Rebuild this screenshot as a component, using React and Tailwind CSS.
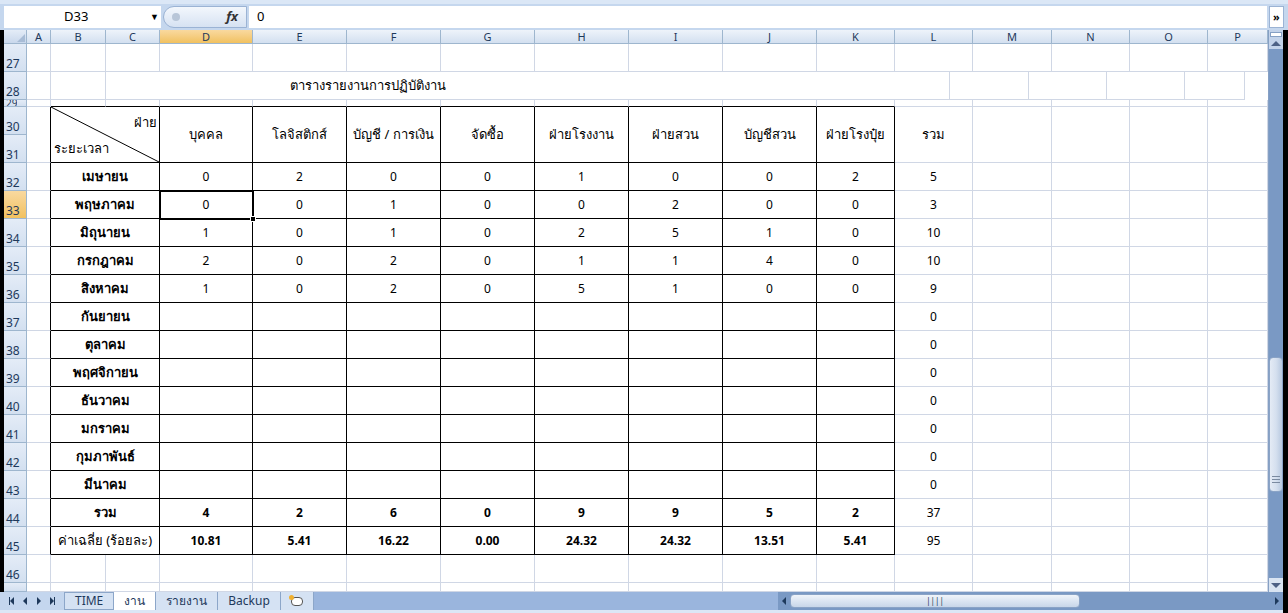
import React from "react";

const cols = [
  ["A", 24], ["B", 55], ["C", 54], ["D", 93], ["E", 94], ["F", 94], ["G", 94], ["H", 94],
  ["I", 94], ["J", 94], ["K", 78], ["L", 78], ["M", 79], ["N", 78], ["O", 78], ["P", 60],
];
const W = Object.fromEntries(cols);
const tableCols = ["D", "E", "F", "G", "H", "I", "J", "K"];
const heads = ["บุคคล", "โลจิสติกส์", "บัญชี / การเงิน", "จัดซื้อ", "ฝ่ายโรงงาน", "ฝ่ายสวน", "บัญชีสวน", "ฝ่ายโรงปุ๋ย"];
const months = ["เมษายน", "พฤษภาคม", "มิถุนายน", "กรกฎาคม", "สิงหาคม", "กันยายน", "ตุลาคม", "พฤศจิกายน", "ธันวาคม", "มกราคม", "กุมภาพันธ์", "มีนาคม"];
const vals = [
  [0, 2, 0, 0, 1, 0, 0, 2, 5],
  [0, 0, 1, 0, 0, 2, 0, 0, 3],
  [1, 0, 1, 0, 2, 5, 1, 0, 10],
  [2, 0, 2, 0, 1, 1, 4, 0, 10],
  [1, 0, 2, 0, 5, 1, 0, 0, 9],
];
const sum = [4, 2, 6, 0, 9, 9, 5, 2, 37];
const avg = ["10.81", "5.41", "16.22", "0.00", "24.32", "24.32", "13.51", "5.41", "95"];

const font = "font-['Liberation_Sans','Noto_Sans_Thai','Noto_Sans',sans-serif]";

function Cell({ w, h, black, children, className = "" }) {
  return (
    <div
      className={`box-border shrink-0 border-r border-b flex items-center justify-center text-[12px] text-black ${black ? "border-black" : "border-[#d0d7e5]"} ${className}`}
      style={{ width: w, height: h }}
    >
      {children}
    </div>
  );
}

function Blank({ h, from = 0, to = 16, blackB = [] }) {
  return cols.slice(from, to).map(([c, w]) => (
    <Cell key={c} w={w} h={h} className={blackB.includes(c) ? "!border-b-black" : ""} />
  ));
}

function Row({ children }) {
  return <div className="flex shrink-0">{children}</div>;
}

function TableRow({ label, data, bold, totalBold, h = 28 }) {
  return (
    <Row>
      <Cell w={24} h={h} className="!border-r-black" />
      <Cell w={109} h={h} black className="text-[13px]">
        <span className={bold ? "font-semibold" : ""}>{label}</span>
      </Cell>
      {tableCols.map((c, i) => (
        <Cell key={c} w={W[c]} h={h} black className={totalBold ? "font-['Liberation_Serif',serif] font-bold" : ""}>
          {data ? data[i] : ""}
        </Cell>
      ))}
      <Cell w={78} h={h}>{data ? data[8] : 0}</Cell>
      <Blank h={h} from={12} />
    </Row>
  );
}

const Tri = ({ dir, c = "border-[#1e395b]" }) => {
  const m = {
    l: `border-y-[4px] border-y-transparent border-r-[4px] ${c.replace("border-", "border-r-")}`,
    r: `border-y-[4px] border-y-transparent border-l-[4px] ${c.replace("border-", "border-l-")}`,
  };
  return <span className={`inline-block w-0 h-0 ${m[dir]}`} />;
};

export default function App() {
  const rowNums = [
    [27, 28], [28, 28], [29, 7], [30, 28], [31, 28], [32, 28], [33, 28], [34, 28], [35, 28], [36, 28], [37, 28],
    [38, 28], [39, 28], [40, 28], [41, 28], [42, 28], [43, 28], [44, 28], [45, 28], [46, 28], ["", 9],
  ];
  return (
    <div className={`w-[1288px] h-[613px] bg-black overflow-hidden relative ${font}`}>
      {/* formula bar */}
      <div className="h-[30px] bg-[#c5d7ee] border-t-4 border-[#dbe7f6] flex items-center px-1 gap-[2px]">
        <div className="h-[22px] w-[157px] shrink-0 bg-white flex items-center text-[13px] relative">
          <span className="ml-[60px]">D33</span>
          <span className="absolute right-[2px] text-[9px]">▼</span>
        </div>
        <div className="h-[22px] w-[84px] shrink-0 bg-gradient-to-b from-[#f3f7fc] to-[#d6e2f2] rounded-l-full border border-[#9bb3d4] flex items-center justify-between px-2">
          <span className="w-[8px] h-[8px] rounded-full bg-[#b8c6d8]" />
          <span className="font-['Liberation_Serif',serif] italic font-bold text-[13px] text-[#333]">fx</span>
        </div>
        <div className="h-[22px] flex-1 bg-white flex items-center pl-2 text-[13px]">0</div>
        <div className="h-[22px] w-[15px] shrink-0 bg-white border border-[#9bb3d4] text-[11px] font-bold flex items-center justify-center">»</div>
      </div>

      <div className="flex ml-1 w-[1279px]">
        {/* row headers */}
        <div className="flex flex-col w-[23px] shrink-0">
          <div className="h-[14px] shrink-0 bg-gradient-to-b from-[#e4ecf7] to-[#c9d8ec] border-r border-b border-[#9eb6ce] flex items-end justify-end p-[1px]">
            <div className="w-0 h-0 border-l-[8px] border-l-transparent border-b-[8px] border-b-[#a8bcd6]" />
          </div>
          {rowNums.map(([n, h], i) => (
            <div
              key={i}
              style={{ height: h }}
              className={`box-border shrink-0 border-b border-r border-[#9eb6ce] flex items-end text-[12px] leading-[14px] pl-[2px] overflow-hidden ${n === 33 ? "bg-gradient-to-b from-[#f9d99f] to-[#f1c15f] text-[#1e395b]" : "bg-gradient-to-b from-[#e4ecf7] to-[#d3e0f0] text-[#1e395b]"}`}
            >
              {n === 29 ? <span className="text-[10px] leading-[6px] h-[6px] overflow-hidden">29</span> : n}
            </div>
          ))}
        </div>

        {/* grid */}
        <div className="flex flex-col bg-white relative w-[1241px] shrink-0">
          <div className="flex h-[14px] shrink-0">
            {cols.map(([c, w]) => (
              <div
                key={c}
                style={{ width: w }}
                className={`box-border shrink-0 border-r border-b border-[#9eb6ce] text-[11px] leading-[13px] text-center text-[#1e395b] ${c === "D" ? "bg-gradient-to-b from-[#f9d99f] to-[#f1c15f]" : "bg-gradient-to-b from-[#eef3fa] to-[#d3e0f0]"}`}
              >
                {c}
              </div>
            ))}
          </div>
          <Row><Blank h={28} /></Row>
          <Row>
            <Blank h={28} from={0} to={2} />
            <Cell w={844} h={28} className="justify-start pl-[184px] text-[13px]">ตารางรายงานการปฏิบัติงาน</Cell>
            <Blank h={28} from={12} />
          </Row>
          <Row>
            <Blank h={7} blackB={["B", "C", "D", "E", "F", "G", "H", "I", "J", "K"]} />
          </Row>
          <Row>
            <Cell w={24} h={56} className="!border-r-black" />
            <Cell w={109} h={56} black className="relative text-[13px]">
              <svg className="absolute inset-0" width="108" height="55">
                <line x1="0" y1="0" x2="108" y2="55" stroke="black" strokeWidth="1" />
              </svg>
              <span className="absolute right-[2px] top-[6px]">ฝ่าย</span>
              <span className="absolute left-[3px] bottom-[4px]">ระยะเวลา</span>
            </Cell>
            {tableCols.map((c, i) => (
              <Cell key={c} w={W[c]} h={56} black className="text-[13px]">{heads[i]}</Cell>
            ))}
            <Cell w={78} h={56} className="text-[13px]">รวม</Cell>
            <Blank h={56} from={12} />
          </Row>
          {months.map((m, i) => (
            <TableRow key={m} label={m} bold data={vals[i]} />
          ))}
          <TableRow label="รวม" bold data={sum} totalBold />
          <TableRow label="ค่าเฉลี่ย (ร้อยละ)" data={avg} totalBold />
          <Row><Blank h={28} /></Row>
          <Row><Blank h={9} /></Row>
          {/* selected D33 */}
          <div className="absolute left-[132px] top-[160px] w-[95px] h-[30px] border-2 border-black pointer-events-none">
            <div className="absolute -right-[4px] -bottom-[4px] w-[6px] h-[6px] bg-black border border-white" />
          </div>
        </div>

        {/* vertical scrollbar */}
        <div className="w-[15px] shrink-0 h-[562px] bg-[#c3d3ea] border-l border-[#86a0c4] flex flex-col items-center">
          <div className="w-[12px] h-[5px] mt-[2px] bg-white border border-[#86a0c4]" />
          <div className="mt-[4px] w-0 h-0 border-l-[5px] border-r-[5px] border-b-[5px] border-l-transparent border-r-transparent border-b-[#4d6185]" />
          <div className="flex-1 w-full bg-[#7a99c4] mt-[3px] relative">
            <div className="absolute left-0 right-0 top-[308px] h-[135px] bg-gradient-to-r from-[#e4ebf5] via-[#d5e0ef] to-[#b8c9e0] border border-[#8aa3c6] rounded-sm flex items-end justify-center pb-[8px]">
              <div className="w-[8px] h-[7px] border-y border-[#7a8aa0] flex flex-col justify-center"><div className="border-t border-[#7a8aa0]" /></div>
            </div>
          </div>
          <div className="bg-[#d9e4f2] w-full h-[14px] flex items-center justify-center">
            <div className="w-0 h-0 border-l-[5px] border-r-[5px] border-t-[5px] border-l-transparent border-r-transparent border-t-[#4d6185]" />
          </div>
        </div>
      </div>

      {/* sheet tabs + h-scroll */}
      <div className="absolute left-0 top-[592px] w-[1283px] h-[18px] bg-[#9ab5dd] flex items-center text-[12px] text-[#1e395b]">
        <div className="w-[64px] h-full flex items-center justify-around px-1 bg-[#c4d6ee]">
          <span className="flex items-center"><span className="w-[1px] h-[8px] bg-[#1e395b]" /><Tri dir="l" /></span>
          <Tri dir="l" />
          <Tri dir="r" />
          <span className="flex items-center"><Tri dir="r" /><span className="w-[1px] h-[8px] bg-[#1e395b]" /></span>
        </div>
        <div className="h-full px-[10px] flex items-center bg-[#d5e2f3] border border-[#8ca6c9]">TIME</div>
        <div className="h-full px-[10px] flex items-center bg-white">งาน</div>
        <div className="h-full px-[10px] flex items-center bg-[#d5e2f3] border-x border-[#8ca6c9]">รายงาน</div>
        <div className="h-full px-[10px] flex items-center bg-[#d5e2f3] border-r border-[#8ca6c9]">Backup</div>
        <div className="h-full px-[10px] flex items-center bg-[#d5e2f3] border-r border-[#8ca6c9]">
          <span className="w-[12px] h-[9px] border border-[#555] rounded-sm bg-white relative">
            <span className="absolute -left-[3px] -top-[3px] w-[5px] h-[5px] rounded-full bg-[#f0b030]" />
          </span>
        </div>
        <div className="flex-1" />
        <div className="w-[505px] h-full bg-[#7a99c4] flex items-center px-1 gap-1">
          <Tri dir="l" c="border-[#334466]" />
          <div className="w-[290px] h-[14px] bg-gradient-to-b from-[#f0f4fa] to-[#c8d6e9] border border-[#8aa3c6] rounded-sm flex items-center justify-center text-[8px]">||||</div>
          <div className="flex-1" />
          <Tri dir="r" c="border-[#334466]" />
        </div>
      </div>
      <div className="absolute left-0 top-[610px] w-[1283px] h-[3px] bg-[#dbe7f6]" />
    </div>
  );
}
